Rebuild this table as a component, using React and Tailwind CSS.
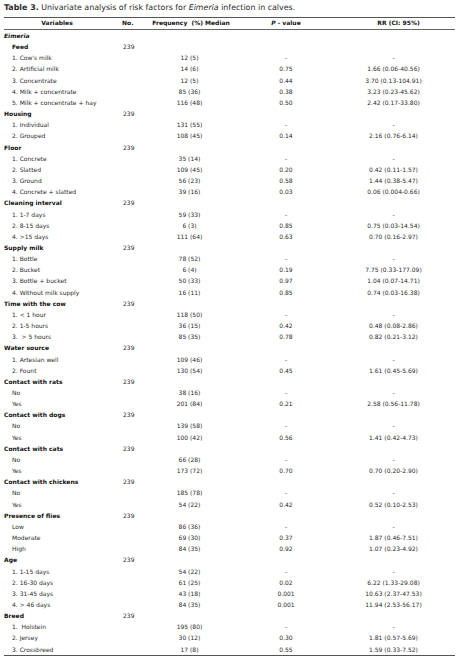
import React from "react";

const rows = [
  ["h", "Eimeria", "", "", "", "", true],
  ["c", "Feed", "239"],
  ["i", "1. Cow's milk", "", "12 (5)", "-", "-"],
  ["i", "2. Artificial milk", "", "14 (6)", "0.75", "1.66 (0.06-40.56)"],
  ["i", "3. Concentrate", "", "12 (5)", "0.44", "3.70 (0.13-104.91)"],
  ["i", "4. Milk + concentrate", "", "85 (36)", "0.38", "3.23 (0.23-45.62)"],
  ["i", "5. Milk + concentrate + hay", "", "116 (48)", "0.50", "2.42 (0.17-33.80)"],
  ["h", "Housing", "239"],
  ["i", "1. Individual", "", "131 (55)", "-", "-"],
  ["i", "2. Grouped", "", "108 (45)", "0.14", "2.16 (0.76-6.14)"],
  ["h", "Floor", "239"],
  ["i", "1. Concrete", "", "35 (14)", "-", "-"],
  ["i", "2. Slatted", "", "109 (45)", "0.20", "0.42 (0.11-1.57)"],
  ["i", "3. Ground", "", "56 (23)", "0.58", "1.44 (0.38-5.47)"],
  ["i", "4. Concrete + slatted", "", "39 (16)", "0.03", "0.06 (0.004-0.66)"],
  ["h", "Cleaning interval", "239"],
  ["i", "1. 1-7 days", "", "59 (33)", "-", "-"],
  ["i", "2. 8-15 days", "", "6 (3)", "0.85", "0.75 (0.03-14.54)"],
  ["i", "4. >15 days", "", "111 (64)", "0.63", "0.70 (0.16-2.97)"],
  ["h", "Supply milk", "239"],
  ["i", "1. Bottle", "", "78 (52)", "-", "-"],
  ["i", "2. Bucket", "", "6 (4)", "0.19", "7.75 (0.33-177.09)"],
  ["i", "3. Bottle + bucket", "", "50 (33)", "0.97", "1.04 (0.07-14.71)"],
  ["i", "4. Without milk supply", "", "16 (11)", "0.85", "0.74 (0.03-16.38)"],
  ["h", "Time with the cow", "239"],
  ["i", "1. < 1 hour", "", "118 (50)", "-", "-"],
  ["i", "2. 1-5 hours", "", "36 (15)", "0.42", "0.48 (0.08-2.86)"],
  ["i", "3.  > 5 hours", "", "85 (35)", "0.78", "0.82 (0.21-3.12)"],
  ["h", "Water source", "239"],
  ["i", "1. Artesian well", "", "109 (46)", "-", "-"],
  ["i", "2. Fount", "", "130 (54)", "0.45", "1.61 (0.45-5.69)"],
  ["h", "Contact with rats", "239"],
  ["i", "No", "", "38 (16)", "-", "-"],
  ["i", "Yes", "", "201 (84)", "0.21", "2.58 (0.56-11.78)"],
  ["h", "Contact with dogs", "239"],
  ["i", "No", "", "139 (58)", "-", "-"],
  ["i", "Yes", "", "100 (42)", "0.56", "1.41 (0.42-4.73)"],
  ["h", "Contact with cats", "239"],
  ["i", "No", "", "66 (28)", "-", "-"],
  ["i", "Yes", "", "173 (72)", "0.70", "0.70 (0.20-2.90)"],
  ["h", "Contact with chickens", "239"],
  ["i", "No", "", "185 (78)", "-", "-"],
  ["i", "Yes", "", "54 (22)", "0.42", "0.52 (0.10-2.53)"],
  ["h", "Presence of flies", "239"],
  ["i", "Low", "", "86 (36)", "-", "-"],
  ["i", "Moderate", "", "69 (30)", "0.37", "1.87 (0.46-7.51)"],
  ["i", "High", "", "84 (35)", "0.92", "1.07 (0.23-4.92)"],
  ["h", "Age", "239"],
  ["i", "1. 1-15 days", "", "54 (22)", "-", "-"],
  ["i", "2. 16-30 days", "", "61 (25)", "0.02", "6.22 (1.33-29.08)"],
  ["i", "3. 31-45 days", "", "43 (18)", "0.001", "10.63 (2.37-47.53)"],
  ["i", "4. > 46 days", "", "84 (35)", "0.001", "11.94 (2.53-56.17)"],
  ["h", "Breed", "239"],
  ["i", "1.  Holstein", "", "195 (80)", "-", "-"],
  ["i", "2. Jersey", "", "30 (12)", "0.30", "1.81 (0.57-5.69)"],
  ["i", "3. Crossbreed", "", "17 (8)", "0.55", "1.59 (0.33-7.52)"],
];

const grid = "grid grid-cols-[106px_40px_82px_108px_115px]";

export default function App() {
  return (
    <div
      className="w-[458px] h-[658px] bg-white overflow-hidden px-[4px] text-[#2a2a2a]"
      style={{ fontFamily: '"DejaVu Sans", Verdana, sans-serif' }}
    >
      <div className="h-[17px] leading-[15px] text-[7.9px] text-[#2b2b2b] whitespace-nowrap">
        <span className="font-bold">Table 3.</span> Univariate analysis of risk factors for{" "}
        <i>Eimeria</i> infection in calves.
      </div>
      <div className="w-[451px] border-t-[1.5px] border-[#555]">
        <div className={`${grid} h-[12px] border-b border-[#666] text-[6px] font-bold text-[#111] leading-[10.5px] whitespace-nowrap`}>
          <div className="text-center">Variables</div>
          <div className="pl-[12px]">No.</div>
          <div className="text-center">Frequency&nbsp;&nbsp;(%) Median</div>
          <div className="text-center">
            <i>P</i> - value
          </div>
          <div className="text-center pl-[2px]">RR (CI: 95%)</div>
        </div>
        <div className="border-b-[1.5px] border-[#555]">
          {rows.map((r, idx) => {
            const [kind, label, no, freq, p, rr, italic] = r;
            const bold = kind === "h" || kind === "c";
            return (
              <div
                key={idx}
                className={`${grid} h-[11.16px] leading-[11.16px] text-[6px] whitespace-pre`}
              >
                <div
                  className={`${kind === "h" ? "pl-0" : "pl-[8px]"} ${
                    bold ? "font-bold text-[#111]" : ""
                  } ${italic ? "italic" : ""}`}
                >
                  {label}
                </div>
                <div className="pl-[13px]">{no}</div>
                <div className="text-center pr-[3px]">{freq}</div>
                <div className="text-center">{p}</div>
                <div className="text-center pr-[8px]">{rr}</div>
              </div>
            );
          })}
        </div>
      </div>
    </div>
  );
}
